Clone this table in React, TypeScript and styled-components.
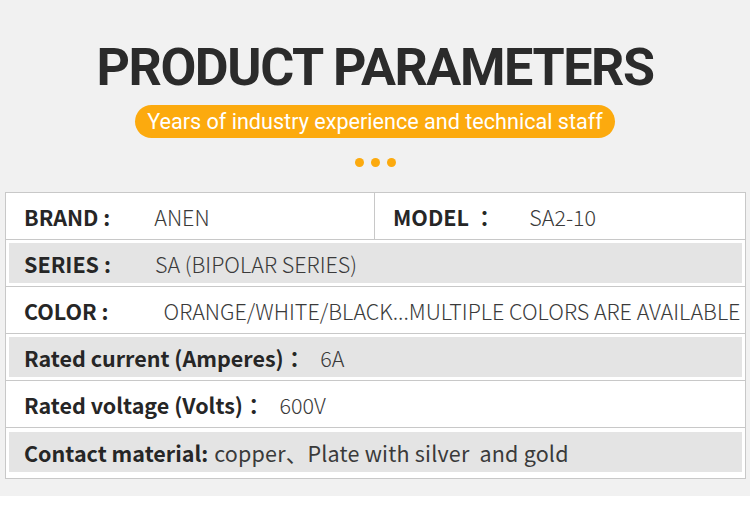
import React from "react";
import styled, { createGlobalStyle } from "styled-components";

const Global = createGlobalStyle`
  html, body { margin: 0; padding: 0; background: #ffffff; }
  * { box-sizing: border-box; }
`;

const Page = styled.div`
  width: 750px;
  height: 496px;
  background: #f1f1f1;
  display: flex;
  flex-direction: column;
  align-items: center;
  padding-top: 44px;
`;

const Title = styled.h1`
  margin: 0;
  font-family: Roboto, "Liberation Sans", sans-serif;
  font-weight: 700;
  font-size: 52px;
  line-height: 48px;
  color: #2b2b2b;
  letter-spacing: -1.4px;
`;

const Pill = styled.div`
  margin-top: 13px;
  height: 33px;
  padding: 0 12px;
  border-radius: 17px;
  background: #fcaa0e;
  color: #ffffff;
  font-family: Roboto, "Liberation Sans", sans-serif;
  font-size: 21.6px;
  line-height: 33px;
  white-space: nowrap;
`;

const Dots = styled.div`
  margin-top: 20px;
  display: flex;
  gap: 7px;
`;

const Dot = styled.span`
  width: 9px;
  height: 9px;
  border-radius: 50%;
  background: #fcaa0e;
`;

const Table = styled.div`
  margin-top: 25px;
  align-self: flex-start;
  margin-left: 5px;
  width: 741px;
  background: #ffffff;
  border: 1px solid #c8c8c8;
  font-family: "Noto Sans CJK JP", "Noto Sans", sans-serif;
  font-size: 21.5px;
  color: #2a2a2a;
`;

const SplitRow = styled.div`
  display: grid;
  grid-template-columns: 368px 1fr;
  height: 46px;
`;

const Cell = styled.div<{ $divider?: boolean }>`
  display: flex;
  align-items: center;
  padding-left: 18px;
  border-left: ${(p) => (p.$divider ? "1px solid #c8c8c8" : "none")};
  white-space: nowrap;
`;

const Row = styled.div<{ $last?: boolean }>`
  border-top: 1px solid #c8c8c8;
  height: ${(p) => (p.$last ? "51px" : "47px")};
  padding: ${(p) => (p.$last ? "4px 3px 6px" : "3px")};
  display: flex;
`;

const RowInner = styled.div<{ $shaded?: boolean }>`
  flex: 1;
  display: flex;
  align-items: center;
  padding-left: 15px;
  background: ${(p) => (p.$shaded ? "#e4e4e4" : "transparent")};
  white-space: nowrap;
`;

const Label = styled.span`
  font-weight: 700;
  color: #262626;
`;

const Value = styled.span<{ $gap: number; $regular?: boolean }>`
  margin-left: ${(p) => p.$gap}px;
  font-weight: ${(p) => (p.$regular ? 400 : 300)};
  letter-spacing: ${(p) => (p.$regular ? "0.2px" : "0")};
  color: #3a3a3a;
`;

export default function App() {
  return (
    <>
      <Global />
      <Page>
        <Title>PRODUCT PARAMETERS</Title>
        <Pill>Years of industry experience and technical staff</Pill>
        <Dots>
          <Dot />
          <Dot />
          <Dot />
        </Dots>
        <Table>
          <SplitRow>
            <Cell>
              <Label>BRAND :</Label>
              <Value $gap={44}>ANEN</Value>
            </Cell>
            <Cell $divider>
              <Label>MODEL ：</Label>
              <Value $gap={34}>SA2-10</Value>
            </Cell>
          </SplitRow>
          <Row>
            <RowInner $shaded>
              <Label>SERIES :</Label>
              <Value $gap={44}>SA (BIPOLAR SERIES)</Value>
            </RowInner>
          </Row>
          <Row>
            <RowInner>
              <Label>COLOR :</Label>
              <Value $gap={55}>ORANGE/WHITE/BLACK...MULTIPLE COLORS ARE AVAILABLE</Value>
            </RowInner>
          </Row>
          <Row>
            <RowInner $shaded>
              <Label>Rated current (Amperes)：</Label>
              <Value $gap={15}>6A</Value>
            </RowInner>
          </Row>
          <Row>
            <RowInner>
              <Label>Rated voltage (Volts)：</Label>
              <Value $gap={15}>600V</Value>
            </RowInner>
          </Row>
          <Row $last>
            <RowInner $shaded>
              <Label>Contact material:</Label>
              <Value $gap={6} $regular>
                copper、Plate with silver&nbsp;&nbsp;and gold
              </Value>
            </RowInner>
          </Row>
        </Table>
      </Page>
    </>
  );
}
